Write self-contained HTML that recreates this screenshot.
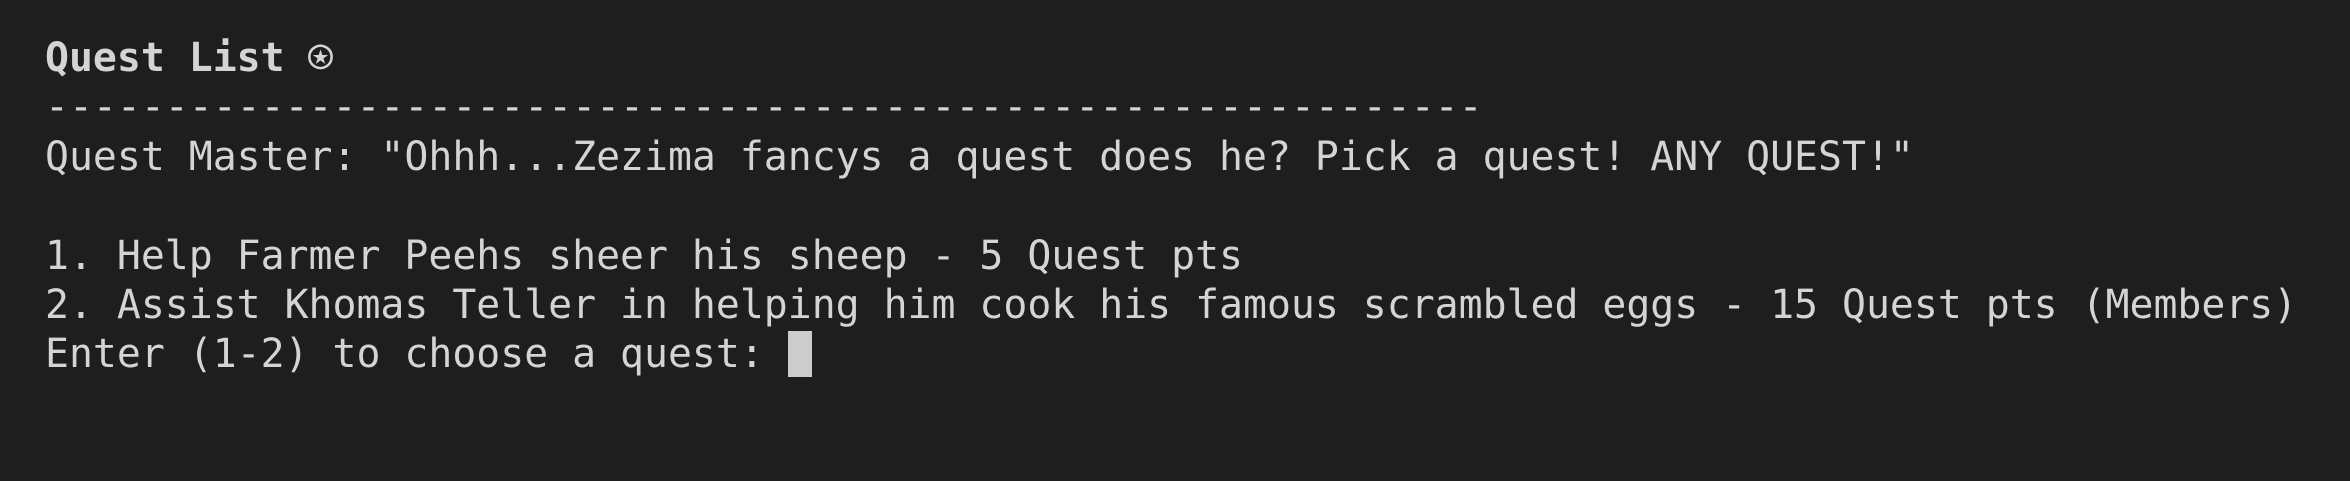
<!DOCTYPE html>
<html><head><style>
html,body{margin:0;padding:0;background:#1e1e1e;width:2350px;height:481px;overflow:hidden}
pre{margin:0;padding:34px 0 0 45px;font-family:"DejaVu Sans Mono",monospace;font-size:39.8px;line-height:49.4px;color:#d4d4d4}
b{font-weight:bold}
.c{display:inline-block;width:24px;height:46px;background:#cccccc;vertical-align:-10px}
</style></head><body>
<pre><b>Quest List ⍟</b>
------------------------------------------------------------
Quest Master: "Ohhh...Zezima fancys a quest does he? Pick a quest! ANY QUEST!"

1. Help Farmer Peehs sheer his sheep - 5 Quest pts
2. Assist Khomas Teller in helping him cook his famous scrambled eggs - 15 Quest pts (Members)
Enter (1-2) to choose a quest: <span class="c"></span></pre>
</body></html>
